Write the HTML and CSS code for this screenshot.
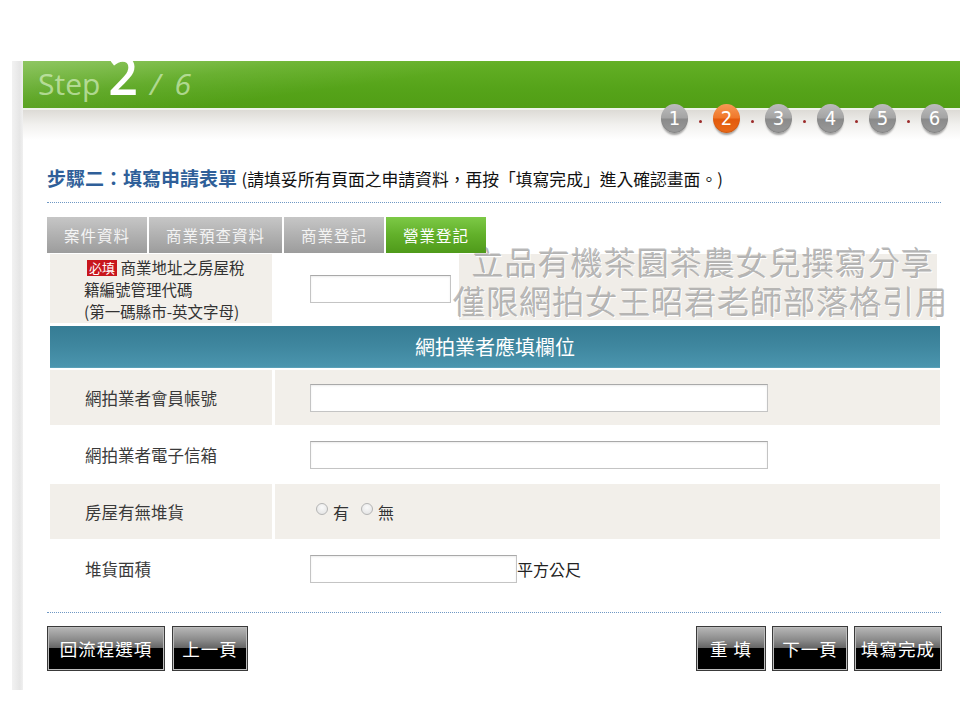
FILE: index.html
```html
<!DOCTYPE html>
<html lang="zh-Hant">
<head>
<meta charset="utf-8">
<title>Step 2 / 6</title>
<link rel="stylesheet" href="styles.css">
</head>
<body>
<div class="page">
  <div class="frame">
    <div class="edge"></div>
    <div class="main">
      <div class="hero">
        <div class="hero-title">
          <span class="h-step">Step</span>
          <span class="h-num">2</span>
          <span class="h-slash">/</span>
          <span class="h-total">6</span>
        </div>
      </div>
      <div class="sub">
        <div class="steps">
          <span class="step">1</span><span class="dot"></span>
          <span class="step active">2</span><span class="dot"></span>
          <span class="step">3</span><span class="dot"></span>
          <span class="step">4</span><span class="dot"></span>
          <span class="step">5</span><span class="dot"></span>
          <span class="step">6</span>
        </div>
      </div>

      <div class="content">
        <div class="heading">
          <span class="h-main">步驟二：填寫申請表單</span>
          <span class="h-note">(請填妥所有頁面之申請資料，再按「填寫完成」進入確認畫面。)</span>
        </div>

        <div class="formwrap">
          <div class="tabs">
            <div class="tab t1">案件資料</div>
            <div class="tab t2">商業預查資料</div>
            <div class="tab t3">商業登記</div>
            <div class="tab t4 active">營業登記</div>
          </div>

          <div class="row first">
            <div class="label multi">
              <div><span class="req">必填</span> 商業地址之房屋稅</div>
              <div>籍編號管理代碼</div>
              <div>(第一碼縣市-英文字母)</div>
            </div>
            <div class="value white"><input class="field short" type="text"></div>
          </div>

          <div class="section">網拍業者應填欄位</div>

          <div class="row">
            <div class="label">網拍業者會員帳號</div>
            <div class="value"><input class="field" type="text"></div>
          </div>
          <div class="row plain">
            <div class="label">網拍業者電子信箱</div>
            <div class="value"><input class="field" type="text"></div>
          </div>
          <div class="row">
            <div class="label">房屋有無堆貨</div>
            <div class="value radios">
              <label class="opt"><input class="radio" type="radio" name="stock">有</label>
              <label class="opt"><input class="radio" type="radio" name="stock">無</label>
            </div>
          </div>
          <div class="row plain">
            <div class="label">堆貨面積</div>
            <div class="value"><input class="field area" type="text"><span class="unit">平方公尺</span></div>
          </div>

          <div class="watermark">
            <div>立品有機茶園茶農女兒撰寫分享</div>
            <div>僅限網拍女王昭君老師部落格引用</div>
          </div>
        </div>

        <div class="buttons">
          <div class="group">
            <button class="btn w118">回流程選項</button>
            <button class="btn w76">上一頁</button>
          </div>
          <div class="group right">
            <button class="btn w70">重 填</button>
            <button class="btn w76">下一頁</button>
            <button class="btn w88">填寫完成</button>
          </div>
        </div>
      </div>
    </div>
  </div>
</div>
</body>
</html>
```

FILE: styles.css
```css
* { box-sizing: border-box; }
html, body { margin: 0; padding: 0; background: #fff; }
body {
  font-family: "Noto Sans CJK TC", "Noto Sans", sans-serif;
  color: #333;
  width: 960px;
  height: 720px;
  overflow: hidden;
}
.page { padding-top: 61px; }
.frame {
  display: flex;
  margin-left: 12px;
  height: 629px;
}
.edge {
  width: 11px;
  background: linear-gradient(to right, #f2f2f2, #e6e6e6 70%, #f0f0f0);
}
.main { flex: 1; min-width: 0; }

/* header */
.hero {
  height: 47px;
  background:
    linear-gradient(172deg, rgba(255,255,255,0.28) 0%, rgba(255,255,255,0.08) 22%, rgba(255,255,255,0) 40%),
    linear-gradient(180deg, #64b026 0%, #56a41a 55%, #519e15 100%);
}
.hero-title {
  display: flex;
  align-items: baseline;
  padding-left: 15px;
  height: 47px;
  font-family: "Open Sans", "DejaVu Sans", sans-serif;
  line-height: 28px;
}
.h-step { font-size: 30px; color: rgba(228, 248, 212, 0.62); }
.h-num { font-size: 52px; font-weight: 600; color: #fff; margin-left: 8px; }
.h-slash { font-size: 30px; color: rgba(228, 248, 212, 0.62); font-style: italic; margin-left: 12px; }
.h-total { font-size: 30px; color: rgba(228, 248, 212, 0.62); font-style: italic; margin-left: 14px; }

.sub {
  height: 32px;
  border-top: 2px solid #eef3ea;
  background: linear-gradient(180deg, #dddbd6 0%, #f2f1ef 50%, #ffffff 100%);
}
.steps {
  display: flex;
  justify-content: flex-end;
  align-items: center;
  padding-right: 12px;
  margin-top: -8px;
  height: 32px;
}
.step {
  width: 27px;
  height: 29px;
  border-radius: 50%;
  display: flex;
  align-items: center;
  justify-content: center;
  color: #fff;
  font-family: "DejaVu Sans Condensed", "Liberation Sans Narrow", "Liberation Sans", sans-serif;
  font-size: 20px;
  background: linear-gradient(180deg, #bcbcbc 0%, #a4a4a4 48%, #8a8a8a 52%, #9a9a9a 100%);
  box-shadow: 0 3px 2px -1px rgba(0,0,0,0.35), inset 0 -1px 1px rgba(0,0,0,0.15);
}
.step.active {
  background: linear-gradient(180deg, #f79a55 0%, #f0772a 48%, #e35a0c 52%, #ea6a1a 100%);
}
.dot {
  width: 3px;
  height: 3px;
  border-radius: 50%;
  background: #9c2a2a;
  margin: 6px 11px 0;
}

/* content */
.content { padding: 0 19px 0 24px; }
.heading {
  margin-top: 26px;
  height: 37px;
  padding-bottom: 12px;
  line-height: 24px;
  border-bottom: 1px dotted #6f98c4;
  white-space: nowrap;
}
.h-main {
  font-size: 19px;
  font-weight: bold;
  color: #2f5f99;
}
.h-note {
  font-size: 16.8px;
  color: #111;
  margin-left: 1px;
}

.formwrap { position: relative; margin-top: 14px; }
.tabs {
  display: flex;
  gap: 2px;
  height: 36px;
}
.tab {
  height: 36px;
  line-height: 36px;
  text-align: center;
  font-size: 15.5px;
  letter-spacing: 1px;
  color: #f4f4f4;
  background: linear-gradient(180deg, #c6c6c6 0%, #b1b1b1 50%, #9c9c9c 100%);
}
.t1 { width: 100px; }
.t2 { width: 133px; }
.t3 { width: 100px; }
.t4 { width: 100px; }
.tab.active {
  color: #fff;
  background: linear-gradient(180deg, #7dc946 0%, #62b02a 50%, #4f9a1a 100%);
}

.row {
  display: grid;
  grid-template-columns: 222px 665px;
  column-gap: 3px;
  margin-left: 3px;
  height: 55px;
  margin-top: 2px;
}
.row.first { height: 69px; margin-top: 1px; }
.label {
  background: #f2efea;
  display: flex;
  align-items: center;
  padding-left: 35px;
  font-size: 16.5px;
  color: #3a3a3a;
}
.label.multi {
  flex-direction: column;
  align-items: flex-start;
  justify-content: center;
  padding-left: 34px;
  font-size: 15.5px;
  line-height: 22px;
  color: #333;
}
.req {
  display: inline-block;
  background: #c8161d;
  color: #fff;
  font-size: 13px;
  line-height: 16px;
  padding: 0 2px;
  margin-left: 3px;
  vertical-align: 1px;
}
.value {
  background: #f2efea;
  display: flex;
  align-items: center;
  padding-left: 35px;
}
.value.white { background: #fff; }
.row.plain .label, .row.plain .value { background: #fff; }

.field {
  width: 458px;
  height: 28px;
  border: 1px solid #c4c4c4;
  border-top-color: #a9a9a9;
  background: #fff;
  box-shadow: inset 0 1px 2px rgba(0,0,0,0.08);
  margin: 0;
  padding: 0 4px;
  font: inherit;
}
.field.short { width: 141px; }
.field.area { width: 207px; }
.unit { font-size: 16px; color: #222; }

.section {
  margin: 3px 0 0 3px;
  width: 890px;
  height: 42px;
  line-height: 42px;
  text-align: center;
  color: #fff;
  font-size: 20px;
  background: linear-gradient(180deg, #367c94 0%, #3f879f 50%, #4b95ae 100%);
  border-bottom: 1px solid #5aa0b8;
}
.row:nth-of-type(3) { margin-top: 3px; }

.radios { padding-left: 41px; }
.opt {
  display: inline-flex;
  align-items: center;
  font-size: 16px;
  color: #333;
  margin-right: 12px;
}
.radio {
  -webkit-appearance: none;
  appearance: none;
  width: 12px;
  height: 12px;
  border-radius: 50%;
  border: 1px solid #b5b5b5;
  background: radial-gradient(circle at 50% 35%, #fafafa 0%, #e0e0e0 100%);
  margin: -6px 5px 0 0;
}

.watermark {
  position: absolute;
  left: 412px;
  top: 37px;
  width: 478px;
  height: 66px;
  background: #f0ede8;
  pointer-events: none;
}
.watermark div {
  font-family: "Noto Sans CJK TC", sans-serif;
  font-weight: 300;
  font-size: 32px;
  line-height: 39px;
  color: #b4b4b4;
  text-shadow: 1px 1px 0 #fff, -1px -1px 0 rgba(110,110,110,0.45);
  white-space: nowrap;
  text-align: center;
  letter-spacing: 1px;
}
.watermark div:first-child { margin-top: -12px; margin-left: 10px; }
.watermark div:last-child { margin-left: -8px; margin-right: -14px; }

.buttons {
  margin-top: 16px;
  border-top: 1px dotted #6f98c4;
  padding-top: 13px;
  display: flex;
  justify-content: space-between;
}
.group { display: flex; gap: 7px; }
.group.right { gap: 6px; margin-right: -1px; }
.btn {
  height: 45px;
  border: 1px solid #3a3a3a;
  outline: 1px solid #bdbdbd;
  outline-offset: -2px;
  color: #fff;
  font-family: "Noto Sans CJK TC", sans-serif;
  font-size: 17.5px;
  letter-spacing: 1px;
  padding: 0;
  background: linear-gradient(180deg, #b8b8b8 0%, #8a8a8a 30%, #666 48%, #000 50%, #000 100%);
  cursor: pointer;
}
.w118 { width: 118px; }
.w76 { width: 76px; }
.w70 { width: 70px; }
.w88 { width: 88px; }
```
